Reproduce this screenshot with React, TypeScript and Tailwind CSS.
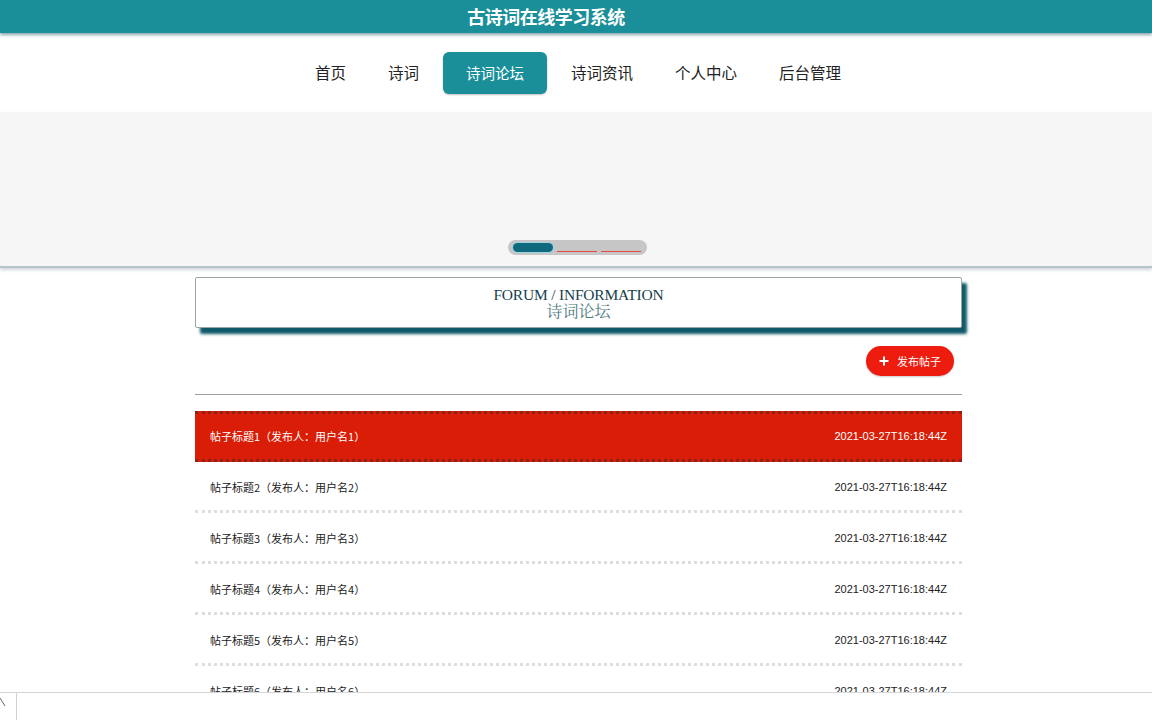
const NAV = ["首页", "诗词", "诗词论坛", "诗词资讯", "个人中心", "后台管理"];
const POSTS = Array.from({ length: 8 }, (_, i) => ({
  title: `帖子标题${i + 1}（发布人：用户名${i + 1}）`,
  time: "2021-03-27T16:18:44Z",
}));

const sans = "font-['Microsoft_YaHei','Noto_Sans_CJK_SC',sans-serif]";

export default function App() {
  return (
    <div className={`min-h-screen bg-white ${sans} text-[#333]`}>
      {/* top title bar */}
      <header className="h-[33px] bg-[#1a8f99] shadow-[0_2px_3px_rgba(0,60,70,0.45)] flex items-center justify-center pr-[60px] relative z-10">
        <h1 className="text-white text-[18px] font-bold tracking-[-0.5px]">古诗词在线学习系统</h1>
      </header>

      {/* nav */}
      <nav className="h-[79px] flex items-center justify-center pl-[4px]">
        <ul className="flex items-center">
          {NAV.map((n) =>
            n === "诗词论坛" ? (
              <li key={n} className="mx-[3px] h-[42px] px-[23px] rounded-[6px] bg-[#1a8f99] text-white text-[14.5px] flex items-center shadow-[0_1px_2px_rgba(0,0,0,0.25)]">
                {n}
              </li>
            ) : (
              <li key={n} className="px-[21px] text-[15.5px] text-[#222]">{n}</li>
            )
          )}
        </ul>
      </nav>

      {/* banner */}
      <section className="h-[156px] bg-[#f6f6f6] border-b-2 border-[#b5c3cc] shadow-[0_2px_3px_rgba(120,140,160,0.35)] flex items-end justify-center pb-[11px] pl-[2px]">
        <div className="w-[139px] h-[15px] rounded-full bg-[#c6c6c6] flex items-center px-[5px] gap-[4px]">
          <span className="w-[40px] h-[9px] rounded-full bg-[#0f6a7e] ring-1 ring-[#9fd3e0]" />
          <span className="w-[40px] h-[9px] flex items-end">
            <span className="w-full h-px bg-[#e04848]" />
          </span>
          <span className="w-[40px] h-[9px] flex items-end">
            <span className="w-full h-px bg-[#e04848]" />
          </span>
        </div>
      </section>

      {/* main */}
      <main className="flex justify-center pl-[5px] pt-[9px] pb-[40px]">
        <div className="w-[767px]">
          <div className="h-[51px] border border-[#9aa5aa] rounded-[2px] bg-white shadow-[5px_6px_3px_#10596a] flex flex-col items-center justify-center font-['Times_New_Roman','Liberation_Serif','Noto_Serif_CJK_SC',serif] leading-[17px]">
            <div className="text-[15.5px] text-[#163f4c] tracking-[-0.2px]">FORUM / INFORMATION</div>
            <div className="text-[16px] text-[#4f7a82]">诗词论坛</div>
          </div>

          <div className="flex justify-end pr-[8px] mt-[18px]">
            <button className="w-[88px] h-[30px] rounded-full bg-[#ed1c0f] text-white text-[11px] flex items-center justify-center gap-[8px] shadow-[0_1px_2px_rgba(0,0,0,0.2)]">
              <svg width="10" height="10" viewBox="0 0 10 10">
                <path d="M5 0.5v9M0.5 5h9" stroke="white" strokeWidth="2" />
              </svg>
              <span>发布帖子</span>
            </button>
          </div>

          <hr className="mt-[18px] border-t border-[#a0a0a0]" />

          <ul className="mt-[16px]">
            {POSTS.map((p, i) => (
              <li
                key={i}
                className={
                  i === 0
                    ? "h-[51px] bg-[#d91d06] border-y-[3px] border-dotted border-[#8a2418] text-white flex items-center justify-between px-[15px] text-[11px]"
                    : "h-[51px] border-b-[3px] border-dotted border-[#dedede] text-[#222] flex items-center justify-between px-[15px] text-[11px] pt-[3px]"
                }
              >
                <span>{p.title}</span>
                <span className="font-['Arial','Liberation_Sans',sans-serif]">{p.time}</span>
              </li>
            ))}
          </ul>
        </div>
      </main>

      {/* bottom bar */}
      <div className="fixed left-0 right-0 bottom-0 h-[28px] bg-white border-t border-[#d6d6d6] flex items-stretch z-20">
        <div className="w-[17px] border-r border-[#cfcfcf] flex items-start pt-[4px]">
          <svg width="6" height="10" viewBox="0 0 6 10">
            <path d="M0 1l5 8" stroke="#666" strokeWidth="1" fill="none" />
          </svg>
        </div>
      </div>
    </div>
  );
}
